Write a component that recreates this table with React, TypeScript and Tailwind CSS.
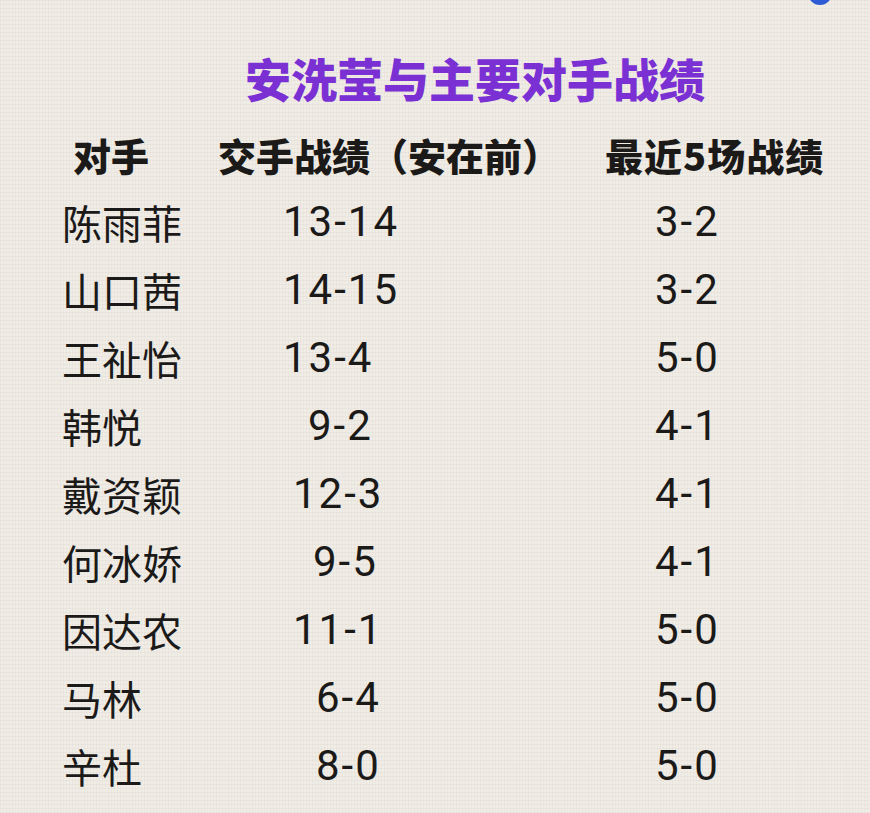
import React from "react";

interface Row {
  name: string;
  h2h: string;
  h2hPad: string;
  recent: string;
  recentPad: string;
}

const rows: Row[] = [
  { name: "陈雨菲", h2h: "13-14", h2hPad: "pl-0", recent: "3-2", recentPad: "pl-0" },
  { name: "山口茜", h2h: "14-15", h2hPad: "pl-0", recent: "3-2", recentPad: "pl-0" },
  { name: "王祉怡", h2h: "13-4", h2hPad: "pl-0", recent: "5-0", recentPad: "pl-0" },
  { name: "韩悦", h2h: "9-2", h2hPad: "pl-[25px]", recent: "4-1", recentPad: "pl-0" },
  { name: "戴资颖", h2h: "12-3", h2hPad: "pl-[10px]", recent: "4-1", recentPad: "pl-0" },
  { name: "何冰娇", h2h: "9-5", h2hPad: "pl-[30px]", recent: "4-1", recentPad: "pl-0" },
  { name: "因达农", h2h: "11-1", h2hPad: "pl-[10px]", recent: "5-0", recentPad: "pl-0" },
  { name: "马林", h2h: "6-4", h2hPad: "pl-[33px]", recent: "5-0", recentPad: "pl-0" },
  { name: "辛杜", h2h: "8-0", h2hPad: "pl-[33px]", recent: "5-0", recentPad: "pl-0" },
];

export default function App() {
  return (
    <div className="relative w-[870px] h-[813px] overflow-hidden bg-[#f0ece6] bg-[repeating-linear-gradient(0deg,rgba(120,100,80,0.05)_0px,rgba(120,100,80,0.05)_1px,transparent_1px,transparent_4px),repeating-linear-gradient(90deg,rgba(120,100,80,0.04)_0px,rgba(120,100,80,0.04)_1px,transparent_1px,transparent_3px)] text-[#1b1a19] font-['Noto_Sans_CJK_SC',sans-serif]">
      {/* top-right dot */}
      <div className="absolute top-[-19px] left-[808px] w-[24px] h-[24px] rounded-full bg-[#2f5ad6]" />

      {/* title */}
      <div className="h-[122px] pt-[54px] pl-[245px]">
        <h1 className="text-[46px] leading-none font-black text-[#7a30d2]">
          安洗莹与主要对手战绩
        </h1>
      </div>

      {/* header */}
      <div className="h-[66px] flex items-center text-[38px] leading-none font-black">
        <div className="w-[218px] pl-[73px]">对手</div>
        <div className="w-[387px]">交手战绩（安在前）</div>
        <div className="tracking-[1px]">最近5场战绩</div>
      </div>

      {/* rows */}
      <div className="flex flex-col">
        {rows.map((r) => (
          <div key={r.name} className="h-[68px] flex items-center pl-[62px] text-[40px] leading-none">
            <div className="w-[221px]">{r.name}</div>
            <div className={`w-[372px] text-[42px] tracking-[2px] font-['Roboto','Noto_Sans_CJK_SC',sans-serif] ${r.h2hPad}`}>
              {r.h2h}
            </div>
            <div className={`text-[42px] tracking-[2px] font-['Roboto','Noto_Sans_CJK_SC',sans-serif] ${r.recentPad}`}>
              {r.recent}
            </div>
          </div>
        ))}
      </div>
    </div>
  );
}
